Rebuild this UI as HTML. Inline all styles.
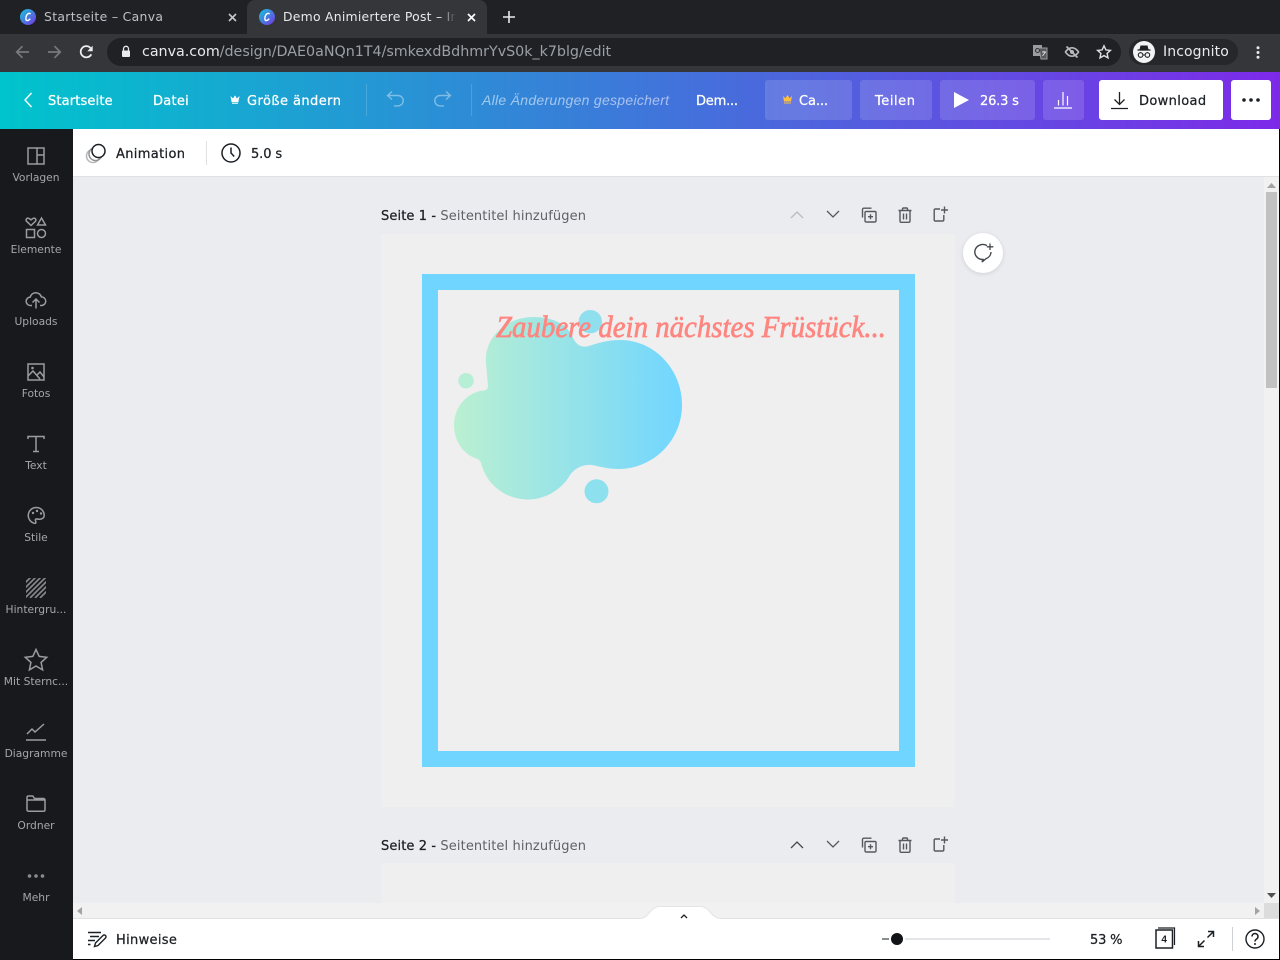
<!DOCTYPE html>
<html lang="de"><head><meta charset="utf-8"><title>Demo Animiertere Post</title>
<style>
html,body{margin:0;padding:0;width:1280px;height:960px;overflow:hidden;background:#000}
*{box-sizing:border-box}
body{position:relative;font-family:"DejaVu Sans","Liberation Sans",sans-serif}
.a{position:absolute;white-space:nowrap}
.t{position:absolute;white-space:nowrap;line-height:20px;height:20px}
.s{-webkit-text-stroke:.25px currentColor}
svg{position:absolute;overflow:visible}
.btn{position:absolute;top:80px;height:40px;background:rgba(255,255,255,.14);border-radius:3px}
.nav{position:absolute;left:0;width:72px;text-align:center;color:#a4a6a8;font-size:10.7px;line-height:14px;white-space:nowrap}
.tw{font-size:13px;color:#fff}
.ic{fill:none;stroke:#9a9c9f;stroke-width:1.5}
.pi{fill:none;stroke:#55585c;stroke-width:1.4}
</style></head><body>

<!-- browser chrome -->
<div class="a" style="left:0;top:0;width:1280px;height:34px;background:#202124"></div>
<div class="a" style="left:247px;top:0;width:240px;height:34px;background:#35363a;border-radius:8px 8px 0 0"></div>
<div class="a" style="left:0;top:34px;width:1280px;height:38px;background:#35363a"></div>
<div class="a" style="left:107px;top:38px;width:1014px;height:28px;background:#202124;border-radius:14px"></div>

<svg style="left:20px;top:9px" width="16" height="16" viewBox="0 0 16 16"><defs><linearGradient id="cv" x1="0" y1="0" x2="1" y2="1"><stop offset="0" stop-color="#13c8d8"/><stop offset="1" stop-color="#7a32e6"/></linearGradient></defs><circle cx="8" cy="8" r="8" fill="url(#cv)"/><path d="M10.5 5.2C9.8 3.6 7.6 4.3 6.5 6.6 5.4 9 5.7 11.6 7.2 11.6c1.1 0 2.2-.9 3-2" fill="none" stroke="#fff" stroke-width="1.4"/></svg>
<div class="t" style="left:44px;top:7px;font-size:12.4px;color:#bdc1c6;letter-spacing:.33px">Startseite – Canva</div>
<svg style="left:228px;top:13px" width="9" height="9" viewBox="0 0 9 9"><path d="M1 1l7 7M8 1l-7 7" stroke="#c4c7cb" stroke-width="1.6"/></svg>

<svg style="left:259px;top:9px" width="16" height="16" viewBox="0 0 16 16"><circle cx="8" cy="8" r="8" fill="url(#cv)"/><path d="M10.5 5.2C9.8 3.6 7.6 4.3 6.5 6.6 5.4 9 5.7 11.6 7.2 11.6c1.1 0 2.2-.9 3-2" fill="none" stroke="#fff" stroke-width="1.4"/></svg>
<div class="a" style="left:283px;top:7px;width:176px;height:20px;overflow:hidden;line-height:20px;font-size:12.4px;color:#e8eaed;letter-spacing:.25px">Demo Animiertere Post – Instagram</div>
<div class="a" style="left:440px;top:7px;width:20px;height:20px;background:linear-gradient(90deg,rgba(53,54,58,0),#35363a 80%)"></div>
<svg style="left:467px;top:13px" width="9" height="9" viewBox="0 0 9 9"><path d="M1 1l7 7M8 1l-7 7" stroke="#fff" stroke-width="1.7"/></svg>
<svg style="left:503px;top:11px" width="12" height="12" viewBox="0 0 12 12"><path d="M6 0v12M0 6h12" stroke="#e8eaed" stroke-width="1.6"/></svg>

<svg style="left:15px;top:45px" width="15" height="14" viewBox="0 0 15 14"><path d="M14 7H2M7.5 1.2L1.7 7l5.8 5.8" fill="none" stroke="#77797d" stroke-width="1.7"/></svg>
<svg style="left:47px;top:45px" width="15" height="14" viewBox="0 0 15 14"><path d="M1 7h12M7.5 1.2L13.3 7l-5.800 5.800" fill="none" stroke="#77797d" stroke-width="1.7"/></svg>
<svg style="left:79px;top:45px" width="15" height="14" viewBox="0 0 15 14"><path d="M12.3 9.3A5.6 5.6 0 1 1 11.5 3" fill="none" stroke="#eceef0" stroke-width="1.8"/><path d="M13.7.8v5.4H8.3z" fill="#eceef0"/></svg>
<svg style="left:121px;top:45px" width="10" height="13" viewBox="0 0 10 13"><path d="M2.5 6V3.8a2.5 2.5 0 0 1 5 0V6" fill="none" stroke="#e8eaed" stroke-width="1.3"/><rect x="1" y="5.5" width="8" height="6.500" rx="1" fill="#e8eaed"/></svg>
<div class="t" style="left:142px;top:42px;font-size:14.3px;letter-spacing:-.03px;color:#9aa0a6"><span style="color:#e8eaed">canva.com</span>/design/DAE0aNQn1T4/smkexdBdhmrYvS0k_k7blg/edit</div>

<svg style="left:1032px;top:44px" width="16" height="16" viewBox="0 0 16 16"><rect x="1" y="1" width="9" height="11" fill="#9a9da1"/><path d="M7 4h8v11H9z" fill="#55585c" stroke="#9a9da1"/><circle cx="5.5" cy="6.5" r="2" fill="none" stroke="#333" stroke-width="1.1"/><path d="M10 8h4M12 7v1M10.5 12l3-4" stroke="#ddd" fill="none"/></svg>
<svg style="left:1064px;top:44px" width="16" height="16" viewBox="0 0 16 16"><path d="M1.5 8S4 3.8 8 3.8 14.5 8 14.5 8 12 12.2 8 12.2 1.5 8 1.5 8z" fill="none" stroke="#b5b8bc" stroke-width="1.7"/><circle cx="8" cy="8" r="2" fill="#b5b8bc"/><path d="M2.500 2.500l11 11" stroke="#b5b8bc" stroke-width="1.8"/></svg>
<svg style="left:1096px;top:44px" width="16" height="16" viewBox="0 0 16 16"><path d="M8 1.800l1.900 4.100 4.500.5-3.300 3 .9 4.500L8 11.600l-4 2.300.9-4.500-3.300-3 4.500-.5z" fill="none" stroke="#dfe1e5" stroke-width="1.4"/></svg>

<div class="a" style="left:1129px;top:39px;width:109px;height:26px;background:#26272a;border-radius:13px"></div>
<svg style="left:1133px;top:41px" width="22" height="22" viewBox="0 0 22 22"><circle cx="11" cy="11" r="11" fill="#f1f3f4"/><path d="M7.5 4.5h7l1 4h-9z" fill="#202124"/><path d="M4.5 9h13" stroke="#202124" stroke-width="1.3"/><circle cx="7.6" cy="14" r="2.3" fill="none" stroke="#202124" stroke-width="1.1"/><circle cx="14.4" cy="14" r="2.3" fill="none" stroke="#202124" stroke-width="1.1"/><path d="M9.9 14h2.2" stroke="#202124"/></svg>
<div class="t" style="left:1163px;top:42px;font-size:14px;color:#e8eaed;letter-spacing:.1px">Incognito</div>
<svg style="left:1256px;top:46px" width="4" height="13" viewBox="0 0 4 13"><circle cx="2" cy="1.800" r="1.5" fill="#e8eaed"/><circle cx="2" cy="6.500" r="1.5" fill="#e8eaed"/><circle cx="2" cy="11.200" r="1.5" fill="#e8eaed"/></svg>

<!-- canva header -->
<div class="a" style="left:0;top:72px;width:1280px;height:57px;background:linear-gradient(90deg,#00c4cc 0%,#7d2ae8 100%)"></div>
<svg style="left:23px;top:92px" width="10" height="16" viewBox="0 0 10 16"><path d="M8.500 1L2 8l6.500 7" fill="none" stroke="#fff" stroke-width="1.4"/></svg>
<div class="t tw s" style="left:48px;top:92px;letter-spacing:.15px">Startseite</div>
<div class="t tw s" style="left:153px;top:92px;letter-spacing:.25px">Datei</div>
<svg style="left:230px;top:95px" width="10" height="10" viewBox="0 0 10 10"><path d="M1 2l2.200 2L5 1l1.800 3L9 2 8 7H2z M2 8.500h6" fill="#fff" stroke="#fff" stroke-width=".7"/></svg>
<div class="t tw s" style="left:247px;top:92px;letter-spacing:.43px">Größe ändern</div>
<div class="a" style="left:366px;top:84px;width:1px;height:32px;background:rgba(255,255,255,.16)"></div>
<svg style="left:386px;top:90px" width="20" height="18" viewBox="0 0 20 18"><path d="M6 1.500L1.500 5.500 6 9.500M2 5.500h10a5.200 5.200 0 0 1 0 10.400H8" fill="none" stroke="#fff" stroke-opacity=".4" stroke-width="1.4"/></svg>
<svg style="left:432px;top:90px" width="20" height="18" viewBox="0 0 20 18"><path d="M14 1.500l4.500 4-4.500 4M18 5.500H8a5.200 5.200 0 0 0 0 10.400h4" fill="none" stroke="#fff" stroke-opacity=".4" stroke-width="1.4"/></svg>
<div class="a" style="left:471px;top:84px;width:1px;height:32px;background:rgba(255,255,255,.16)"></div>
<div class="t" style="left:482px;top:90px;font-size:14px;font-style:italic;color:rgba(255,255,255,.55);font-family:'Liberation Sans',sans-serif;letter-spacing:.28px">Alle Änderungen gespeichert</div>
<div class="t tw s" style="left:696px;top:92px;letter-spacing:-.2px">Dem...</div>

<div class="btn" style="left:765px;width:87px"></div>
<svg style="left:782px;top:94px" width="11" height="10" viewBox="0 0 11 10"><path d="M1 2l2.400 2.300L5.500 1l2.100 3.300L10 2 9 7.500H2z" fill="#ffbe3c"/><path d="M2 9h7" stroke="#ffbe3c"/></svg>
<div class="t tw s" style="left:799px;top:92px;letter-spacing:-.1px">Ca...</div>
<div class="btn" style="left:860px;width:72px"></div>
<div class="t tw s" style="left:875px;top:92px;letter-spacing:.55px">Teilen</div>
<div class="btn" style="left:940px;width:95px"></div>
<svg style="left:954px;top:92px" width="15" height="16" viewBox="0 0 15 16"><path d="M0 0l15 8-15 8z" fill="#fff"/></svg>
<div class="t tw s" style="left:980px;top:92px;letter-spacing:-.2px">26.3 s</div>
<div class="btn" style="left:1043px;width:41px"></div>
<svg style="left:1053px;top:91px" width="20" height="18" viewBox="0 0 20 18"><path d="M1 17h18M5.500 14.500V9M10 14.500V1M14.500 14.500V5" fill="none" stroke="#fff" stroke-width="1.2"/></svg>
<div class="a" style="left:1099px;top:80px;width:124px;height:40px;background:#fff;border-radius:3px"></div>
<svg style="left:1110px;top:91px" width="19" height="19" viewBox="0 0 19 19"><path d="M9.500 1v12M4.500 8.500l5 5 5-5M1 17.500h17" fill="none" stroke="#1c2024" stroke-width="1.3"/></svg>
<div class="t s" style="left:1139px;top:92px;font-size:13px;color:#1c2024;letter-spacing:.35px">Download</div>
<div class="a" style="left:1231px;top:80px;width:40px;height:40px;background:#fff;border-radius:3px"></div>
<svg style="left:1242px;top:98px" width="18" height="4" viewBox="0 0 18 4"><circle cx="2" cy="2" r="1.800" fill="#1c2024"/><circle cx="9" cy="2" r="1.800" fill="#1c2024"/><circle cx="16" cy="2" r="1.800" fill="#1c2024"/></svg>

<!-- workspace -->
<div class="a" style="left:73px;top:129px;width:1206px;height:830px;background:#ebecf0"></div>
<div class="a" style="left:73px;top:129px;width:1206px;height:48px;background:#fff;border-bottom:1px solid #dfe1e5"></div>
<svg style="left:85px;top:142px" width="22" height="22" viewBox="0 0 22 22"><circle cx="8" cy="14" r="6.500" fill="none" stroke="#b4b6b8" stroke-width="1.5"/><circle cx="10.5" cy="12" r="6.500" fill="none" stroke="#8f9194" stroke-width="1.5"/><circle cx="13.5" cy="9" r="6.500" fill="#fff" stroke="#1c2024" stroke-width="1.5"/></svg>
<div class="t s" style="left:116px;top:145px;font-size:13px;color:#1c2024;letter-spacing:.34px">Animation</div>
<div class="a" style="left:206px;top:141px;width:1px;height:24px;background:#dfe1e5"></div>
<svg style="left:221px;top:143px" width="20" height="20" viewBox="0 0 20 20"><circle cx="10" cy="10" r="9" fill="none" stroke="#1c2024" stroke-width="1.5"/><path d="M10 4.500V10l3.200 3.500" fill="none" stroke="#1c2024" stroke-width="1.5"/></svg>
<div class="t s" style="left:251px;top:145px;font-size:13px;color:#1c2024;letter-spacing:-.1px">5.0 s</div>

<!-- sidebar -->
<div class="a" style="left:0;top:129px;width:73px;height:831px;background:#17191c"></div>
<svg style="left:27px;top:147px" width="18" height="18" viewBox="0 0 18 18"><path class="ic" d="M1 1h16v16H1zM10 1v16M10 8h7"/></svg>
<div class="nav" style="top:171px">Vorlagen</div>
<svg style="left:25px;top:217px" width="22" height="22" viewBox="0 0 22 22"><path class="ic" d="M6 8.500L1.500 4.200C.3 2.800 1.800.5 3.700 1.300L6 2.800 8.300 1.300c1.900-.8 3.400 1.500 2.200 2.900zM16.500 1l4 7h-8zM1.500 12.500h8v8h-8z"/><circle class="ic" cx="16.500" cy="16.500" r="4"/></svg>
<div class="nav" style="top:243px">Elemente</div>
<svg style="left:25px;top:290px" width="22" height="20" viewBox="0 0 22 20"><path class="ic" d="M7 15.500H5.500a4.200 4.200 0 0 1-.3-8.400 5.800 5.800 0 0 1 11.200-.2 4.300 4.300 0 0 1 .1 8.600H15M11 18.500V9.500M7.500 12.500L11 9l3.500 3.500"/></svg>
<div class="nav" style="top:315px">Uploads</div>
<svg style="left:27px;top:363px" width="18" height="18" viewBox="0 0 18 18"><path class="ic" d="M1 1h16v16H1zM1 13l5-5 7 8M10 12l3-3 4 5"/><circle cx="5.500" cy="5" r="1.300" fill="#9a9c9f"/></svg>
<div class="nav" style="top:387px">Fotos</div>
<svg style="left:27px;top:435px" width="18" height="18" viewBox="0 0 18 18"><path class="ic" d="M1 4V1.500h16V4M9 1.500V16.500M6 16.500h6"/></svg>
<div class="nav" style="top:459px">Text</div>
<svg style="left:27px;top:506px" width="20" height="20" viewBox="0 0 20 20"><path class="ic" d="M9.500 1.500a8 8 0 0 0-2 15.800c1.800.4 1.500-1.500 1-2.600-.5-1.200.3-2 1.500-1.700 2.600.6 7.200.3 7.200-3.600 0-4.400-3.500-7.900-7.700-7.900z"/><circle cx="6" cy="7" r="1.200" fill="#9a9c9f"/><circle cx="10" cy="5" r="1.200" fill="#9a9c9f"/><circle cx="14" cy="7.500" r="1.200" fill="#9a9c9f"/></svg>
<div class="nav" style="top:531px">Stile</div>
<svg style="left:26px;top:578px" width="20" height="20" viewBox="0 0 20 20"><clipPath id="hg"><rect width="20" height="20"/></clipPath><g clip-path="url(#hg)" stroke="#85878a" stroke-width="1.7"><path d="M-2 6l8-8M-2 11L11-2M-2 16L16-2M-1 20L20-1M4 20L21 3M9 20L21 8M14 20l7-7"/></g></svg>
<div class="nav" style="top:603px">Hintergru...</div>
<svg style="left:24px;top:648px" width="24" height="24" viewBox="0 0 24 24"><path class="ic" d="M12 1.500l3.200 6.900 7.500.9-5.600 5.100 1.500 7.500L12 18l-6.600 3.900 1.500-7.500L1.300 9.300l7.500-.9z"/></svg>
<div class="nav" style="top:675px">Mit Sternc...</div>
<svg style="left:26px;top:723px" width="20" height="18" viewBox="0 0 20 18"><path class="ic" d="M1 11l5-5 3 3 9-8M0 17h20"/></svg>
<div class="nav" style="top:747px">Diagramme</div>
<svg style="left:26px;top:795px" width="20" height="17" viewBox="0 0 20 17"><path class="ic" d="M1 15V2.500C1 1.700 1.500 1 2.300 1h4.500l1.700 2.500h9c.8 0 1.500.6 1.500 1.500v10c0 .8-.7 1.200-1.500 1.200H2.300C1.500 16 1 15.700 1 15zM1 5h18"/></svg>
<div class="nav" style="top:819px">Ordner</div>
<svg style="left:27px;top:873px" width="18" height="6" viewBox="0 0 18 6"><circle cx="2.500" cy="3" r="1.800" fill="#8a8c8f"/><circle cx="9" cy="3" r="1.800" fill="#8a8c8f"/><circle cx="15.500" cy="3" r="1.800" fill="#8a8c8f"/></svg>
<div class="nav" style="top:891px">Mehr</div>

<!-- page 1 header -->
<div class="t" style="left:381px;top:207px;font-size:13px;color:#5e6166;letter-spacing:.11px"><span class="s" style="color:#1c2024">Seite 1 -</span> Seitentitel hinzufügen</div>
<svg style="left:790px;top:210px" width="14" height="9" viewBox="0 0 14 9"><path d="M1 8l6-6 6 6" fill="none" stroke="#b8babd" stroke-width="1.3"/></svg>
<svg style="left:826px;top:210px" width="14" height="9" viewBox="0 0 14 9"><path d="M1 1l6 6 6-6" fill="none" stroke="#55585c" stroke-width="1.3"/></svg>
<svg style="left:861px;top:207px" width="16" height="16" viewBox="0 0 16 16"><path class="pi" d="M10.500 1.200H2.800A1.300 1.300 0 0 0 1.500 2.500v8M5 4.500h9c.5 0 1 .4 1 1v8.500c0 .5-.5 1-1 1H5c-.5 0-1-.5-1-1V5.500c0-.6.500-1 1-1zM9.500 7.200v5M7 9.700h5"/></svg>
<svg style="left:898px;top:207px" width="14" height="16" viewBox="0 0 14 16"><path class="pi" d="M.5 3.500h13M4.500 3.500V2A1 1 0 0 1 5.500 1h3a1 1 0 0 1 1 1v1.500M2 3.500V14a1.300 1.300 0 0 0 1.300 1.300h7.400A1.300 1.300 0 0 0 12 14V3.500M5.500 6.500v6M8.500 6.500v6"/></svg>
<svg style="left:933px;top:206px" width="16" height="16" viewBox="0 0 16 16"><path class="pi" d="M7 3H2.500A1.300 1.300 0 0 0 1.200 4.300v9.400A1.300 1.300 0 0 0 2.500 15h7a1.300 1.300 0 0 0 1.300-1.300V9M11.500.5v7M8 4h7"/></svg>

<!-- page 1 -->
<div class="a" style="left:381px;top:234px;width:574px;height:573px;background:#efefef"></div>
<div class="a" style="left:422px;top:274px;width:493px;height:493px;border:16px solid #71d6ff"></div>
<svg style="left:0;top:0;pointer-events:none" width="1280" height="960" viewBox="0 0 1280 960">
<defs><linearGradient id="bl" gradientUnits="userSpaceOnUse" x1="454" y1="0" x2="682" y2="0"><stop offset="0" stop-color="#bbf0d1"/><stop offset="1" stop-color="#71d6ff"/></linearGradient></defs>
<path d="M486 363C484 337 507 317 533 317C551 317 566 323 572 336C576 345 581 348 589 346C598 343 608 340 620 340C654 340 682 369 682 405C682 440 654 469 618 469C608 469 602 467 592 465C583 464 575 468 570 475C562 489 546 499.500 528 499.500C505 499.500 486 484 481 463C480 460 478 459 475 458C462 453 454 440 454 425C454 407 467 392 484 390.500C487 390 488 388 488 386Z" fill="url(#bl)"/>
<circle cx="590.300" cy="321.700" r="11.700" fill="#8fdfee"/>
<circle cx="466" cy="380.700" r="7.700" fill="#b7eed6"/>
<circle cx="596.500" cy="491.300" r="12" fill="#8de0ee"/>
<text x="496" y="337" font-family="'Liberation Serif',serif" font-style="italic" font-size="31" fill="#ff8680" stroke="#ff8680" stroke-width=".7" textLength="390" lengthAdjust="spacingAndGlyphs">Zaubere dein nächstes Früstück...</text>
</svg>
<div class="a" style="left:963px;top:233px;width:40px;height:40px;background:#fff;border-radius:50%;box-shadow:0 1px 4px rgba(40,40,60,.14)"></div>
<svg style="left:973px;top:243px" width="21" height="20" viewBox="0 0 21 20"><path d="M14 2.600A8 7.500 0 1 0 10 16.500l-1 2.500 4-3.300a7.500 7.500 0 0 0 5-6.700" fill="none" stroke="#44474b" stroke-width="1.4"/><path d="M17 .5v6.500M13.800 3.800h6.500" stroke="#44474b" stroke-width="1.3"/></svg>

<!-- page 2 header -->
<div class="t" style="left:381px;top:837px;font-size:13px;color:#5e6166;letter-spacing:.11px"><span class="s" style="color:#1c2024">Seite 2 -</span> Seitentitel hinzufügen</div>
<svg style="left:790px;top:840px" width="14" height="9" viewBox="0 0 14 9"><path d="M1 8l6-6 6 6" fill="none" stroke="#44474b" stroke-width="1.3"/></svg>
<svg style="left:826px;top:840px" width="14" height="9" viewBox="0 0 14 9"><path d="M1 1l6 6 6-6" fill="none" stroke="#55585c" stroke-width="1.3"/></svg>
<svg style="left:861px;top:837px" width="16" height="16" viewBox="0 0 16 16"><path class="pi" d="M10.500 1.200H2.800A1.300 1.300 0 0 0 1.500 2.500v8M5 4.500h9c.5 0 1 .4 1 1v8.500c0 .5-.5 1-1 1H5c-.5 0-1-.5-1-1V5.500c0-.6.500-1 1-1zM9.500 7.200v5M7 9.700h5"/></svg>
<svg style="left:898px;top:837px" width="14" height="16" viewBox="0 0 14 16"><path class="pi" d="M.5 3.500h13M4.500 3.500V2A1 1 0 0 1 5.500 1h3a1 1 0 0 1 1 1v1.500M2 3.500V14a1.300 1.300 0 0 0 1.300 1.300h7.400A1.300 1.300 0 0 0 12 14V3.500M5.500 6.500v6M8.500 6.500v6"/></svg>
<svg style="left:933px;top:836px" width="16" height="16" viewBox="0 0 16 16"><path class="pi" d="M7 3H2.500A1.300 1.300 0 0 0 1.200 4.300v9.400A1.300 1.300 0 0 0 2.500 15h7a1.300 1.300 0 0 0 1.300-1.300V9M11.500.5v7M8 4h7"/></svg>
<div class="a" style="left:381px;top:863px;width:574px;height:40px;background:#efefef"></div>

<!-- scrollbars -->
<div class="a" style="left:1264px;top:177px;width:15px;height:726px;background:#f1f1f1"></div>
<div class="a" style="left:1266px;top:192px;width:11px;height:196px;background:#c1c1c1"></div>
<svg style="left:1267px;top:183px" width="9" height="5" viewBox="0 0 9 5"><path d="M4.500 0L9 5H0z" fill="#a3a3a3"/></svg>
<svg style="left:1267px;top:893px" width="9" height="5" viewBox="0 0 9 5"><path d="M0 0h9L4.500 5z" fill="#505050"/></svg>
<div class="a" style="left:73px;top:903px;width:1206px;height:15px;background:#f1f1f1"></div>
<div class="a" style="left:1264px;top:903px;width:15px;height:15px;background:#dcdcdc"></div>
<svg style="left:77px;top:907px" width="5" height="8" viewBox="0 0 5 8"><path d="M5 0v8L0 4z" fill="#a3a3a3"/></svg>
<svg style="left:1255px;top:907px" width="5" height="8" viewBox="0 0 5 8"><path d="M0 0v8l5-4z" fill="#a3a3a3"/></svg>

<!-- bottom bar -->
<div class="a" style="left:73px;top:918px;width:1206px;height:41px;background:#fff;border-top:1px solid #dfe1e5"></div>
<svg style="left:640px;top:906px" width="86" height="14" viewBox="0 0 86 14"><path d="M0 12.500C9 12.500 10 0.500 20 0.500H60C70 0.500 71 12.500 81 12.500V14H0z" fill="#fff"/><path d="M0 12.500C9 12.500 10 .5 20 .5H60C70 .5 71 12.500 81 12.500" fill="none" stroke="#e3e4e8"/></svg>
<svg style="left:680px;top:914px" width="8" height="5" viewBox="0 0 8 5"><path d="M1 4l3-3 3 3" fill="none" stroke="#1c2024" stroke-width="1.3"/></svg>
<svg style="left:87px;top:931px" width="20" height="17" viewBox="0 0 20 17"><path d="M1 1.500h13M3 5.500h9M1 9.500h7M1 13.500h2.500" fill="none" stroke="#1c2024" stroke-width="1.4"/><path d="M7.500 15.500l1-3.500 7.500-7.500a1.600 1.600 0 0 1 2.500 2.500L11 14.500z" fill="none" stroke="#1c2024" stroke-width="1.4"/></svg>
<div class="t s" style="left:116px;top:931px;font-size:13px;color:#1c2024;letter-spacing:.32px">Hinweise</div>
<div class="a" style="left:882px;top:938px;width:168px;height:2px;background:#e3e5e8"></div>
<div class="a" style="left:882px;top:938px;width:8px;height:2px;background:#8a8c8f"></div>
<div class="a" style="left:891px;top:933px;width:12px;height:12px;border-radius:50%;background:#111316;box-shadow:0 0 0 2px #fff"></div>
<div class="t s" style="left:1090px;top:931px;font-size:13px;color:#1c2024;letter-spacing:-.2px">53 %</div>
<svg style="left:1155px;top:927px" width="22" height="22" viewBox="0 0 22 22"><path d="M3 1h16.500v17" fill="none" stroke="#1c2024" stroke-width="1.2"/><rect x="1" y="3" width="16.500" height="18" fill="#fff" stroke="#1c2024" stroke-width="1.5"/><text x="9.2" y="15.5" text-anchor="middle" font-size="10" font-weight="700" font-family="'Liberation Sans',sans-serif" fill="#1c2024">4</text></svg>
<svg style="left:1197px;top:930px" width="18" height="18" viewBox="0 0 18 18"><path d="M10.500 7.500L16 2M11 1.500h5.500V7M7.500 10.500L2 16M7 16.500H1.500V11" fill="none" stroke="#1c2024" stroke-width="1.5"/></svg>
<div class="a" style="left:1232px;top:927px;width:1px;height:24px;background:#cfd1d4"></div>
<svg style="left:1245px;top:929px" width="20" height="20" viewBox="0 0 20 20"><circle cx="10" cy="10" r="9" fill="none" stroke="#1c2024" stroke-width="1.4"/><path d="M7 7.500a3 3 0 1 1 4.500 2.600c-1 .6-1.500 1.200-1.500 2.400" fill="none" stroke="#1c2024" stroke-width="1.5"/><circle cx="10" cy="15" r="1" fill="#1c2024"/></svg>
</body></html>
